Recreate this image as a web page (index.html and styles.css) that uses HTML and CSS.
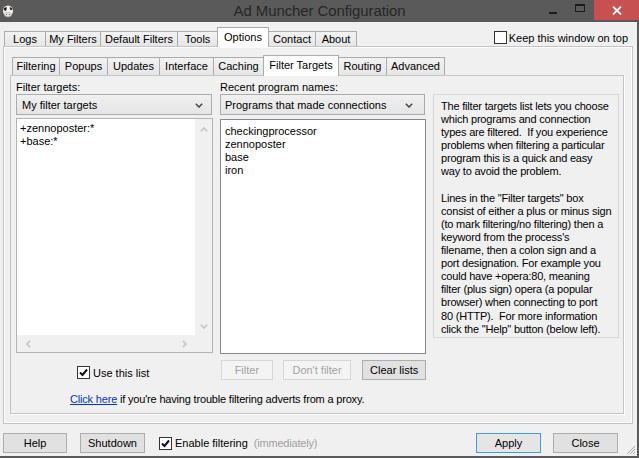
FILE: index.html
```html
<!DOCTYPE html>
<html>
<head>
<meta charset="utf-8">
<title>Ad Muncher Configuration</title>
<link rel="stylesheet" href="styles.css">
</head>
<body>
<div class="window">
  <div class="titlebar">
    <div class="tb-left">
      <svg class="app-icon" width="14" height="15" viewBox="0 0 14 15">
        <path d="M1 2 L3 5 L4 4 Z" fill="#a0622d"/>
        <path d="M13 2 L11 5 L10 4 Z" fill="#a0622d"/>
        <ellipse cx="7" cy="8" rx="5" ry="5.5" fill="#f4f4f4"/>
        <path d="M2.5 6 Q4 3.5 6 4.5 L5 8 Q3 8 2.5 6 Z" fill="#222"/>
        <path d="M11.5 6 Q10 3.5 8.5 4.5 L9.5 7 Q11 7.5 11.5 6 Z" fill="#222"/>
        <ellipse cx="7" cy="11.5" rx="3.5" ry="2.3" fill="#e8e8e8" stroke="#9a9a9a" stroke-width="0.5"/>
        <circle cx="5.6" cy="11.5" r="0.6" fill="#555"/>
        <circle cx="8.4" cy="11.5" r="0.6" fill="#555"/>
      </svg>
    </div>
    <div class="title">Ad Muncher Configuration</div>
    <div class="controls">
      <div class="ctl ctl-min"><span class="min-bar"></span></div>
      <div class="ctl ctl-max"><span class="max-box"></span></div>
      <div class="ctl ctl-close">
        <svg width="10" height="9" viewBox="0 0 10 9"><path d="M1 0.5 L9 8.5 M9 0.5 L1 8.5" stroke="#fff" stroke-width="1.8"/></svg>
      </div>
    </div>
  </div>

  <div class="client">
    <div class="top-row">
      <div class="tab t-logs">Logs</div>
      <div class="tab t-myf">My Filters</div>
      <div class="tab t-deff">Default Filters</div>
      <div class="tab t-tools">Tools</div>
      <div class="tab tab-sel t-opt">Options</div>
      <div class="tab t-contact">Contact</div>
      <div class="tab t-about">About</div>
      <label class="keep"><span class="cb"></span><span>Keep this window on top</span></label>
    </div>

    <div class="outer-panel">
      <div class="sub-row">
        <div class="tab stab s-filtering">Filtering</div>
        <div class="tab stab s-popups">Popups</div>
        <div class="tab stab s-updates">Updates</div>
        <div class="tab stab s-interface">Interface</div>
        <div class="tab stab s-caching">Caching</div>
        <div class="tab stab stab-sel s-targets">Filter Targets</div>
        <div class="tab stab s-routing">Routing</div>
        <div class="tab stab s-advanced">Advanced</div>
      </div>

      <div class="inner-panel">
        <div class="grid">
          <div class="lbl">Filter targets:</div>
          <div class="lbl">Recent program names:</div>
          <div class="info">
            <p>The filter targets list lets you choose<br>which programs and connection<br>types are filtered.&nbsp; If you experience<br>problems when filtering a particular<br>program this is a quick and easy<br>way to avoid the problem.</p>
            <p>Lines in the "Filter targets" box<br>consist of either a plus or minus sign<br>(to mark filtering/no filtering) then a<br>keyword from the process's<br>filename, then a colon sign and a<br>port designation. For example you<br>could have +opera:80, meaning<br>filter (plus sign) opera (a popular<br>browser) when connecting to port<br>80 (HTTP).&nbsp; For more information<br>click the "Help" button (below left).</p>
          </div>

          <div class="combo combo-left"><span>My filter targets</span>
            <svg class="chev" width="8" height="5" viewBox="0 0 8 5"><path d="M0.8 0.8 L4 4 L7.2 0.8" fill="none" stroke="#4a4a4a" stroke-width="1.6"/></svg>
          </div>
          <div class="combo combo-mid"><span>Programs that made connections</span>
            <svg class="chev" width="8" height="5" viewBox="0 0 8 5"><path d="M0.8 0.8 L4 4 L7.2 0.8" fill="none" stroke="#4a4a4a" stroke-width="1.6"/></svg>
          </div>

          <div class="editbox">
            <div class="edit-text">+zennoposter:*<br>+base:*</div>
            <div class="vscroll">
              <svg width="8" height="5" viewBox="0 0 8 5"><path d="M0.8 4.2 L4 1 L7.2 4.2" fill="none" stroke="#c4c4c4" stroke-width="1.6"/></svg>
              <svg width="8" height="5" viewBox="0 0 8 5"><path d="M0.8 0.8 L4 4 L7.2 0.8" fill="none" stroke="#c4c4c4" stroke-width="1.6"/></svg>
            </div>
            <div class="hscroll">
              <svg width="5" height="8" viewBox="0 0 5 8"><path d="M4.2 0.8 L1 4 L4.2 7.2" fill="none" stroke="#c4c4c4" stroke-width="1.6"/></svg>
              <svg width="5" height="8" viewBox="0 0 5 8"><path d="M0.8 0.8 L4 4 L0.8 7.2" fill="none" stroke="#c4c4c4" stroke-width="1.6"/></svg>
            </div>
            <div class="corner"></div>
          </div>
          <div class="listbox">
            <div>checkingprocessor</div>
            <div>zennoposter</div>
            <div>base</div>
            <div>iron</div>
          </div>

          <label class="use-list"><span class="cb cb-on"><svg width="11" height="11" viewBox="0 0 11 11"><path d="M2 5.5 L4.5 8 L9 2.5" fill="none" stroke="#111" stroke-width="2"/></svg></span><span>Use this list</span></label>
          <div class="btn-row">
            <div class="btn btn-dis b-filter">Filter</div>
            <div class="btn btn-dis b-dont">Don't filter</div>
            <div class="btn b-clear">Clear lists</div>
          </div>
        </div>
        <div class="proxy"><a class="link">Click here</a> if you're having trouble filtering adverts from a proxy.</div>
      </div>
    </div>

    <div class="bottom-bar">
      <div class="btn b-help">Help</div>
      <div class="btn b-shutdown">Shutdown</div>
      <label class="enable"><span class="cb cb-on"><svg width="11" height="11" viewBox="0 0 11 11"><path d="M2 5.5 L4.5 8 L9 2.5" fill="none" stroke="#111" stroke-width="2"/></svg></span><span>Enable filtering</span><span class="imm">(immediately)</span></label>
      <div class="btn btn-default b-apply">Apply</div>
      <div class="btn b-close">Close</div>
    </div>

    <svg class="grip" width="10" height="10" viewBox="0 0 10 10">
      <path d="M9 1 L1 9 M9 4 L4 9 M9 7 L7 9" stroke="#a8a8a8" stroke-width="1"/>
    </svg>
  </div>
</div>
</body>
</html>
```

FILE: styles.css
```css
* { box-sizing: border-box; margin: 0; padding: 0; }

body {
  margin: 0;
  width: 639px;
  height: 458px;
  overflow: hidden;
  background: #5a5a5a;
  font-family: "Liberation Sans", Arial, sans-serif;
  font-size: 11px;
  color: #000;
}

.window {
  width: 639px;
  height: 458px;
  display: flex;
  flex-direction: column;
  background: #5a5a5a;
}

/* title bar */
.titlebar {
  height: 22px;
  flex: none;
  display: grid;
  grid-template-columns: 1fr auto 1fr;
  align-items: start;
}
.tb-left { display: flex; }
.app-icon { margin: 3px 0 0 1px; }
.title {
  font-size: 15px;
  line-height: 22px;
  color: #262626;
  letter-spacing: -0.1px;
}
.controls {
  justify-self: end;
  display: flex;
  height: 20px;
}
.ctl {
  height: 20px;
  display: flex;
  align-items: center;
  justify-content: center;
}
.ctl-min { width: 26px; }
.ctl-max { width: 28px; }
.ctl-close { width: 45px; background: #c75050; }
.min-bar { width: 8px; height: 2px; background: #1b1b1b; margin-top: 6px; }
.max-box { width: 10px; height: 8px; border: 1px solid #1b1b1b; border-top-width: 2px; margin-top: -4px; }

/* client */
.client {
  flex: 1;
  margin: 0 2px 2px 0;
  background: #f0f0f0;
  position: relative;
  display: flex;
  flex-direction: column;
}

.top-row {
  height: 24px;
  display: flex;
  align-items: flex-end;
  padding-left: 4px;
  padding-right: 9px;
}

.tab {
  height: 15px;
  line-height: 14px;
  margin-right: -1px;
  border: 1px solid #acacac;
  border-bottom: none;
  background: linear-gradient(#f2f2f2, #e6e6e6);
  text-align: center;
  white-space: nowrap;
}
.tab-sel {
  height: 20px;
  line-height: 18px;
  margin-bottom: -1px;
  background: #fff;
  position: relative;
  z-index: 1;
}
.t-logs { width: 42px; }
.t-myf { width: 56px; }
.t-deff { width: 78px; }
.t-tools { width: 41px; }
.t-opt { width: 52px; }
.t-contact { width: 48px; }
.t-about { width: 42px; }

.keep {
  margin-left: auto;
  height: 15px;
  margin-bottom: 1px;
  display: flex;
  align-items: center;
  gap: 2px;
}

.cb {
  width: 13px;
  height: 13px;
  border: 1px solid #333;
  background: #fff;
  display: flex;
  align-items: center;
  justify-content: center;
  flex: none;
}

/* outer panel */
.outer-panel {
  margin-left: 3px;
  width: 630px;
  height: 378px;
  border: 1px solid #c4c4c4;
  box-shadow: inset 1px 1px 0 #fff, inset -1px -1px 0 #fff;
  flex: none;
}

.sub-row {
  height: 28px;
  display: flex;
  align-items: flex-end;
  padding-left: 8px;
}
.stab {
  height: 18px;
  line-height: 17px;
}
.stab-sel {
  height: 21px;
  line-height: 19px;
  margin-bottom: -1px;
  background: #fff;
  position: relative;
  z-index: 1;
}
.s-filtering { width: 48px; }
.s-popups { width: 49px; }
.s-updates { width: 53px; }
.s-interface { width: 55px; }
.s-caching { width: 51px; }
.s-targets { width: 76px; }
.s-routing { width: 49px; }
.s-advanced { width: 59px; }

.inner-panel {
  margin-left: 6px;
  width: 614px;
  height: 339px;
  border: 1px solid #c4c4c4;
  box-shadow: 1px 1px 0 #fff;
  padding: 5px 4px 0 5px;
}

.grid {
  display: grid;
  grid-template-columns: 197px 206px 186px;
  column-gap: 7px;
  align-items: start;
}

.lbl {
  height: 13px;
  line-height: 13px;
}

.info {
  grid-column: 3;
  grid-row: 1 / span 4;
  margin-top: 13px;
  height: 244px;
  border: 1px solid #d6d6d6;
  padding: 5px 0 0 7px;
  line-height: 13.1px;
  white-space: nowrap;
  letter-spacing: -0.2px;
  overflow: hidden;
}
.info p + p { margin-top: 13.1px; }

.combo {
  height: 21px;
  border: 1px solid #acacac;
  background: linear-gradient(#f0f0f0, #e5e5e5);
  display: flex;
  align-items: center;
  justify-content: space-between;
  padding: 0 8px 0 5px;
}
.combo-left { width: 196px; }
.combo-mid { width: 205px; padding-left: 4px; padding-right: 11px; }
.chev { margin-top: 1px; }

.editbox {
  margin-top: 3px;
  height: 235px;
  border: 1px solid #b4b4b4;
  background: #fff;
  display: grid;
  grid-template-columns: 1fr 17px;
  grid-template-rows: 1fr 17px;
}
.edit-text {
  padding: 3px 0 0 3px;
  line-height: 13.3px;
}
.vscroll {
  background: #f0f0f0;
  display: flex;
  flex-direction: column;
  justify-content: space-between;
  align-items: center;
  padding: 8px 0 6px;
}
.hscroll {
  background: #f0f0f0;
  display: flex;
  justify-content: space-between;
  align-items: center;
  padding: 0 8px 0 9px;
}
.corner { background: #f0f0f0; }

.listbox {
  margin-top: 4px;
  height: 235px;
  border: 1px solid #828790;
  background: #fff;
  padding: 5px 0 0 4px;
  line-height: 13px;
}

.use-list {
  margin-top: 11px;
  padding-left: 61px;
  display: flex;
  align-items: center;
  gap: 3px;
  height: 15px;
}

.btn-row {
  margin-top: 6px;
  display: flex;
  gap: 10px;
  padding-left: 1px;
}

.btn {
  height: 20px;
  line-height: 18px;
  text-align: center;
  border: 1px solid #adadad;
  background: #e1e1e1;
  white-space: nowrap;
}
.btn-dis {
  border-color: #d6d6d6;
  background: #f4f4f4;
  color: #a3a3a3;
}
.btn-default {
  border-color: #3c9cf0;
  background: #e5e5e5;
}
.b-filter { width: 52px; }
.b-dont { width: 69px; }
.b-clear { width: 64px; margin-left: 1px; }

.proxy {
  margin-top: 13px;
  padding-left: 54px;
  line-height: 13px;
  letter-spacing: -0.18px;
}
.link {
  color: #0033cc;
  text-decoration: underline;
}

/* bottom bar */
.bottom-bar {
  flex: 1;
  display: flex;
  align-items: flex-start;
  padding: 9px 0 0 3px;
}
.b-help { width: 64px; }
.b-shutdown { width: 65px; margin-left: 13px; }
.enable {
  margin-left: 14px;
  height: 20px;
  display: flex;
  align-items: center;
  gap: 3px;
}
.imm { color: #a0a0a0; margin-left: 3px; letter-spacing: -0.2px; }
.b-apply { width: 65px; margin-left: auto; }
.b-close { width: 65px; margin-left: 12px; margin-right: 19px; }

.grip {
  position: absolute;
  right: 1px;
  bottom: 1px;
}
```
